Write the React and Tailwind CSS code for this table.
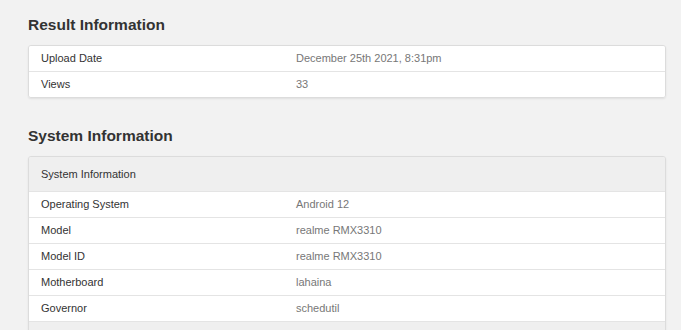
import React from 'react';

const result = [
  ['Upload Date', 'December 25th 2021, 8:31pm'],
  ['Views', '33'],
];

const system = [
  ['Operating System', 'Android 12'],
  ['Model', 'realme RMX3310'],
  ['Model ID', 'realme RMX3310'],
  ['Motherboard', 'lahaina'],
  ['Governor', 'schedutil'],
];

function Row({ label, value }) {
  return (
    <div className="flex h-[26px] items-center border-t border-[#e4e4e4] first:h-[25px] first:border-t-0 bg-white">
      <div className="w-[267px] pl-[12px] text-[#333]">{label}</div>
      <div className="text-[#777]">{value}</div>
    </div>
  );
}

export default function App() {
  return (
    <div className="h-[330px] overflow-hidden bg-[#f2f2f2] px-[28px] pt-[14px] font-['Liberation_Sans',Arial,sans-serif] text-[11px]">
      <h2 className="h-[22px] text-[15.5px] font-bold leading-[22px] text-[#333]">Result Information</h2>
      <div className="mt-[9px] w-[638px] overflow-hidden rounded-[3px] border border-[#dcdcdc] shadow-[0_1px_2px_rgba(0,0,0,0.08)]">
        {result.map(([l, v]) => (
          <Row key={l} label={l} value={v} />
        ))}
      </div>

      <h2 className="mt-[27px] h-[22px] text-[15.5px] font-bold leading-[22px] text-[#333]">System Information</h2>
      <div className="mt-[9px] w-[638px] overflow-hidden rounded-[3px] border border-[#dcdcdc] shadow-[0_1px_2px_rgba(0,0,0,0.08)]">
        <div className="flex h-[34px] items-center bg-[#efefef] pl-[12px] text-[#333]">System Information</div>
        {system.map(([l, v]) => (
          <Row key={l} label={l} value={v} />
        ))}
        <div className="h-[30px] border-t border-[#e4e4e4] bg-[#efefef]" />
      </div>
    </div>
  );
}
